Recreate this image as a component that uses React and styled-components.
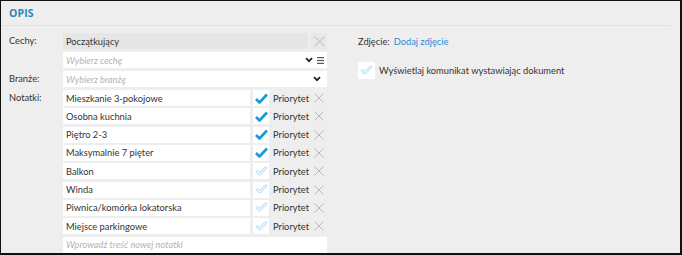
import React from 'react'
import styled, { createGlobalStyle } from 'styled-components'

const GlobalStyle = createGlobalStyle`
  html, body {
    margin: 0;
    padding: 0;
    background: #ffffff;
  }
  body {
    font-family: Lato, "Open Sans", sans-serif;
  }
`

const Panel = styled.div`
  box-sizing: border-box;
  width: 682px;
  height: 255px;
  background: #eeeeee;
  border: 1px solid #111111;
  border-right-width: 2px;
  border-bottom-width: 2px;
  color: #333333;
  font-size: 9.3px;
`

const Header = styled.div`
  height: 24px;
  margin-right: 10px;
  padding-left: 8px;
  border-bottom: 1px solid #e2e2e2;
  display: flex;
  align-items: center;
`

const Title = styled.h2`
  margin: 0;
  font-family: "Open Sans", sans-serif;
  font-size: 10.5px;
  font-weight: 700;
  color: #1f88c5;
  letter-spacing: 0.1px;
`

const Body = styled.div`
  display: flex;
  padding: 7px 0 0 8px;
`

const LeftColumn = styled.div`
  width: 318px;
  display: grid;
  grid-template-columns: 54px minmax(0, 1fr);
  row-gap: 3px;
`

const Label = styled.label`
  line-height: 16px;
  color: #333333;
`

const Stack = styled.div`
  display: flex;
  flex-direction: column;
  gap: ${(p) => p.gap || 3}px;
`

const Line = styled.div`
  display: flex;
  align-items: center;
  height: 16px;
  gap: 3px;
`

const Input = styled.div`
  box-sizing: border-box;
  flex: ${(p) => (p.width ? 'none' : 1)};
  width: ${(p) => (p.width ? `${p.width}px` : 'auto')};
  height: 16px;
  padding: 0 3px 0 3px;
  display: flex;
  align-items: center;
  background: ${(p) => (p.disabled ? '#e6e6e6' : '#ffffff')};
  color: ${(p) => (p.placeholder ? '#b3b3b3' : '#333333')};
  font-style: ${(p) => (p.placeholder ? 'italic' : 'normal')};
  white-space: nowrap;
`

const InputText = styled.span`
  flex: 1;
`

const SquareButton = styled.div`
  width: 16px;
  height: 16px;
  flex: none;
  display: flex;
  align-items: center;
  justify-content: center;
  background: ${(p) => (p.filled ? '#e8e8e8' : 'transparent')};
`

const ChevronSlot = styled.div`
  width: 10px;
  display: flex;
  justify-content: center;
  margin-right: ${(p) => p.gap || 0}px;
`

const CheckBox = styled.div`
  box-sizing: border-box;
  width: ${(p) => p.size || 16}px;
  height: ${(p) => p.size || 16}px;
  flex: none;
  background: #ffffff;
  display: flex;
  align-items: center;
  justify-content: center;
`

const Priority = styled.span`
  flex: 1;
  min-width: 0;
  margin-left: 1px;
  color: #333333;
`

const RightColumn = styled.div`
  margin-left: 31px;
  display: flex;
  flex-direction: column;
  gap: 13px;
`

const PhotoRow = styled.div`
  display: flex;
  align-items: center;
  height: 16px;
  gap: 4px;
`

const Link = styled.a`
  color: #2a8bd3;
  text-decoration: none;
`

const OptionRow = styled.label`
  display: flex;
  align-items: center;
  gap: 4px;
`

const CloseIcon = ({ color = '#b8b8b8', size = 10 }) => (
  <svg width={size} height={size} viewBox="0 0 10 10">
    <path d="M0.5 0.5 L9.5 9.5 M9.5 0.5 L0.5 9.5" stroke={color} strokeWidth="1" fill="none" />
  </svg>
)

const Chevron = () => (
  <svg width="8" height="6" viewBox="0 0 8 6">
    <path d="M1 1.2 L4 4.2 L7 1.2" stroke="#222" strokeWidth="1.8" fill="none" />
  </svg>
)

const MenuIcon = () => (
  <svg width="7" height="7" viewBox="0 0 7 7">
    <rect x="0" y="0" width="7" height="1.2" fill="#555" />
    <rect x="0" y="2.9" width="7" height="1.2" fill="#555" />
    <rect x="0" y="5.8" width="7" height="1.2" fill="#555" />
  </svg>
)

const CheckMark = ({ checked }) =>
  checked ? (
    <svg width="13" height="11" viewBox="0 0 13 11">
      <path d="M1 6 L4.5 9.5 L12 1.5" stroke="#1a98d8" strokeWidth="2.6" fill="none" strokeLinejoin="round" />
    </svg>
  ) : (
    <svg width="13" height="11" viewBox="0 0 13 11">
      <path
        d="M1 5.8 L2.6 4.3 L4.6 6.3 L10.6 0.6 L12.2 2.1 L4.6 9.4 Z"
        stroke="#a9d8f0"
        strokeWidth="0.9"
        fill="#eaf6fc"
        strokeLinejoin="round"
      />
    </svg>
  )

const notes = [
  { text: 'Mieszkanie 3-pokojowe', priority: true },
  { text: 'Osobna kuchnia', priority: true },
  { text: 'Piętro 2-3', priority: true },
  { text: 'Maksymalnie 7 pięter', priority: true },
  { text: 'Balkon', priority: false },
  { text: 'Winda', priority: false },
  { text: 'Piwnica/komórka lokatorska', priority: false },
  { text: 'Miejsce parkingowe', priority: false },
]

const NoteRow = ({ text, priority }) => (
  <Line>
    <Input width={187}>{text}</Input>
    <CheckBox>
      <CheckMark checked={priority} />
    </CheckBox>
    <Priority>Priorytet</Priority>
    <SquareButton>
      <CloseIcon />
    </SquareButton>
  </Line>
)

const App = () => (
  <>
    <GlobalStyle />
    <Panel>
      <Header>
        <Title>OPIS</Title>
      </Header>
      <Body>
        <LeftColumn>
          <Label>Cechy:</Label>
          <Stack>
            <Line>
              <Input disabled>Początkujący</Input>
              <SquareButton filled>
                <CloseIcon color="#c8c8c8" size={11} />
              </SquareButton>
            </Line>
            <Line>
              <Input placeholder="true">
                <InputText>Wybierz cechę</InputText>
                <ChevronSlot gap={3}>
                  <Chevron />
                </ChevronSlot>
                <MenuIcon />
              </Input>
            </Line>
          </Stack>
          <Label>Branże:</Label>
          <Line>
            <Input placeholder="true">
              <InputText>Wybierz branżę</InputText>
              <ChevronSlot gap={2}>
                <Chevron />
              </ChevronSlot>
            </Input>
          </Line>
          <Label>Notatki:</Label>
          <Stack gap={2.33}>
            {notes.map((note) => (
              <NoteRow key={note.text} text={note.text} priority={note.priority} />
            ))}
            <Line>
              <Input placeholder="true">Wprowadź treść nowej notatki</Input>
            </Line>
          </Stack>
        </LeftColumn>
        <RightColumn>
          <PhotoRow>
            <span>Zdjęcie:</span>
            <Link href="#">Dodaj zdjęcie</Link>
          </PhotoRow>
          <OptionRow>
            <CheckBox size={17}>
              <CheckMark checked={false} />
            </CheckBox>
            <span>Wyświetlaj komunikat wystawiając dokument</span>
          </OptionRow>
        </RightColumn>
      </Body>
    </Panel>
  </>
)

export default App
